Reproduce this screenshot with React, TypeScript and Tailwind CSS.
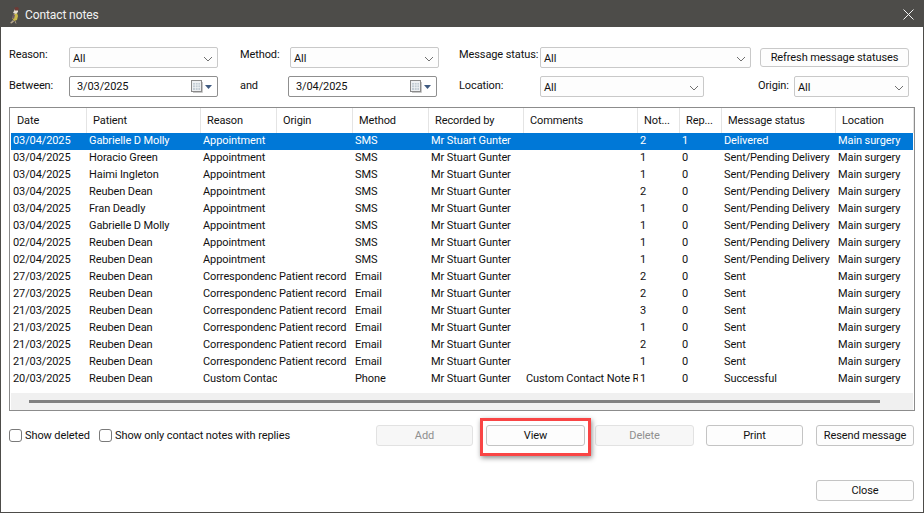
import { ReactNode } from "react";

const rows = [
  ["03/04/2025", "Gabrielle D Molly", "Appointment", "", "SMS", "Mr Stuart Gunter", "", "2", "1", "Delivered", "Main surgery"],
  ["03/04/2025", "Horacio Green", "Appointment", "", "SMS", "Mr Stuart Gunter", "", "1", "0", "Sent/Pending Delivery", "Main surgery"],
  ["03/04/2025", "Haimi Ingleton", "Appointment", "", "SMS", "Mr Stuart Gunter", "", "1", "0", "Sent/Pending Delivery", "Main surgery"],
  ["03/04/2025", "Reuben Dean", "Appointment", "", "SMS", "Mr Stuart Gunter", "", "2", "0", "Sent/Pending Delivery", "Main surgery"],
  ["03/04/2025", "Fran Deadly", "Appointment", "", "SMS", "Mr Stuart Gunter", "", "1", "0", "Sent/Pending Delivery", "Main surgery"],
  ["03/04/2025", "Gabrielle D Molly", "Appointment", "", "SMS", "Mr Stuart Gunter", "", "1", "0", "Sent/Pending Delivery", "Main surgery"],
  ["02/04/2025", "Reuben Dean", "Appointment", "", "SMS", "Mr Stuart Gunter", "", "1", "0", "Sent/Pending Delivery", "Main surgery"],
  ["02/04/2025", "Reuben Dean", "Appointment", "", "SMS", "Mr Stuart Gunter", "", "1", "0", "Sent/Pending Delivery", "Main surgery"],
  ["27/03/2025", "Reuben Dean", "Correspondence", "Patient record", "Email", "Mr Stuart Gunter", "", "2", "0", "Sent", "Main surgery"],
  ["27/03/2025", "Reuben Dean", "Correspondence", "Patient record", "Email", "Mr Stuart Gunter", "", "2", "0", "Sent", "Main surgery"],
  ["21/03/2025", "Reuben Dean", "Correspondence", "Patient record", "Email", "Mr Stuart Gunter", "", "3", "0", "Sent", "Main surgery"],
  ["21/03/2025", "Reuben Dean", "Correspondence", "Patient record", "Email", "Mr Stuart Gunter", "", "1", "0", "Sent", "Main surgery"],
  ["21/03/2025", "Reuben Dean", "Correspondence", "Patient record", "Email", "Mr Stuart Gunter", "", "2", "0", "Sent", "Main surgery"],
  ["21/03/2025", "Reuben Dean", "Correspondence", "Patient record", "Email", "Mr Stuart Gunter", "", "1", "0", "Sent", "Main surgery"],
  ["20/03/2025", "Reuben Dean", "Custom Contact", "", "Phone", "Mr Stuart Gunter", "Custom Contact Note Reply", "1", "0", "Successful", "Main surgery"],
];

const headers = ["Date", "Patient", "Reason", "Origin", "Method", "Recorded by", "Comments", "Not...", "Rep...", "Message status", "Location"];

const colsClass = "grid grid-cols-[76px_114px_76px_76px_76px_95px_114px_42px_42px_114px_78px]";

function Chevron() {
  return (
    <svg width="10" height="6" viewBox="0 0 10 6" className="absolute right-[4px] top-[8px]">
      <path d="M1 1l4 4 4-4" fill="none" stroke="#606060" strokeWidth="0.9" />
    </svg>
  );
}

function Combo({ w }: { w: string }) {
  return (
    <div className={`relative h-[21px] rounded-[2px] border border-[#c9c9c9] bg-[#fdfdfd] pl-[3px] pt-[2px] leading-[18px] ${w}`}>
      All
      <Chevron />
    </div>
  );
}

function DateBox({ value }: { value: string }) {
  return (
    <div className="flex h-[21px] w-[149px] items-center justify-between rounded-[2px] border border-[#8f8f8f] bg-white pl-[7px] pr-[5px]">
      <span className="pt-[1px]">{value}</span>
      <span className="flex items-center gap-[2px]">
        <svg width="12" height="13" viewBox="0 0 12 13">
          <rect x="0.5" y="0.5" width="10" height="11" fill="#eef0f2" stroke="#8a8a8a" />
          <path d="M11.500 2v10.500H2" fill="none" stroke="#c8c8c8" />
          <path d="M2 3h7v7H2z" fill="#c3ccd4" />
          <path d="M2 5h7M2 7.500h7M4.500 3v7M7 3v7" stroke="#f1f3f5" strokeWidth="0.7" />
        </svg>
        <svg width="7" height="4" viewBox="0 0 7 4">
          <path d="M0 0h7L3.500 4z" fill="#3f5a80" />
        </svg>
      </span>
    </div>
  );
}

function Btn({ w, disabled, children }: { w: string; disabled?: boolean; children: ReactNode }) {
  return (
    <div
      className={`flex h-[21px] items-center justify-center rounded-[3px] border pt-[2px] ${
        disabled ? "border-[#e2e2e2] bg-[#f7f7f7] text-[#8f8f8f]" : "border-[#c4c4c4] bg-[#fdfdfd]"
      } ${w}`}
    >
      {children}
    </div>
  );
}

function Check({ label, w }: { label: string; w: string }) {
  return (
    <label className={`flex items-center gap-[3px] whitespace-nowrap ${w}`}>
      <span className="h-[13px] w-[13px] shrink-0 rounded-[3px] border border-[#7a7a7a] bg-white" />
      <span className="pt-[1px]">{label}</span>
    </label>
  );
}

export default function App() {
  return (
    <div
      className="flex h-[513px] w-[924px] flex-col overflow-hidden border-x border-b border-[#4d4c49] bg-white text-[11px] tracking-[-0.1px] text-[#111]"
      style={{ fontFamily: 'Roboto, "Noto Sans", sans-serif' }}
    >
      {/* title bar */}
      <div className="flex h-[27px] shrink-0 items-center justify-between bg-[#4d4c49] pl-[4px] pr-[9px] pt-[2px] text-[#f2f2f2]">
        <div className="flex items-center gap-[3px]">
          <svg width="17" height="18" viewBox="0 0 17 18">
            <path d="M9 8l3-1 1 3-1 4-3 1-2-3z" fill="#c9b84a" />
            <path d="M8 7l2-4 3 0 0 3-2 2z" fill="#e4dcd0" />
            <path d="M9.500 1.500l3-0.500 1.500 1.500-1 2-3 0z" fill="#6e3a35" />
            <path d="M8 8l2 1-1 4-2-1z" fill="#6b5a68" />
            <path d="M8 14l-3 3 1.500 0.500L9 15.500z" fill="#b8a890" />
            <path d="M10 15l1 2.500" stroke="#a89880" strokeWidth="1" />
          </svg>
          <span className="text-[12px]">Contact notes</span>
        </div>
        <svg width="11" height="11" viewBox="0 0 11 11">
          <path d="M0.500 0.500l10 10M10.500 0.500l-10 10" stroke="#f2f2f2" strokeWidth="1" />
        </svg>
      </div>

      {/* filters */}
      <div className="px-[8px] pt-[20px]">
        <div className="flex items-start">
          <span className="w-[60px] leading-[16px]">Reason:</span>
          <Combo w="w-[149px]" />
          <span className="ml-[22px] w-[50px] leading-[16px]">Method:</span>
          <Combo w="w-[149px]" />
          <span className="ml-[20px] w-[81px] whitespace-nowrap leading-[16px]">Message status:</span>
          <Combo w="w-[211px]" />
          <div className="ml-[9px] mt-[1px] flex h-[19px] w-[149px] items-center justify-center rounded-[3px] border border-[#c9c9c9] bg-[#fdfdfd] pt-[2px]">
            Refresh message statuses
          </div>
        </div>
        <div className="mt-[8px] flex items-center">
          <span className="w-[60px]">Between:</span>
          <DateBox value="3/03/2025" />
          <span className="ml-[22px] w-[48px]">and</span>
          <DateBox value="3/04/2025" />
          <span className="ml-[22px] w-[81px]">Location:</span>
          <Combo w="w-[164px]" />
          <span className="ml-[54px] w-[36px]">Origin:</span>
          <Combo w="w-[115px]" />
        </div>
      </div>

      {/* grid */}
      <div className="mx-[8px] mt-[10px] flex h-[304px] w-[906px] flex-col border border-[#8c8c8c] pl-[1px] pr-[1px]">
        <div className={`${colsClass} h-[25px] shrink-0`}>
          {headers.map((h, i) => (
            <div key={i} className="flex items-center overflow-hidden whitespace-nowrap border-r border-[#e4e4e4] pl-[6px] pt-[2px]">
              {h}
            </div>
          ))}
        </div>
        <div className="flex-1">
          {rows.map((row, i) => (
            <div key={i} className={`${colsClass} h-[17px] leading-[16px] ${i === 0 ? "bg-[#0078d7] text-white" : ""}`}>
              {row.map((c, j) => (
                <div key={j} className="overflow-hidden whitespace-nowrap pl-[2px]">
                  {c}
                </div>
              ))}
            </div>
          ))}
        </div>
        <div className="flex h-[17px] shrink-0 items-center bg-[#f0f0f0] pl-[18px]">
          <div className="h-[3px] w-[851px] bg-[#808080]" />
        </div>
      </div>

      {/* actions */}
      <div className="mt-[14px] flex items-center pl-[8px]">
        <Check label="Show deleted" w="w-[90px]" />
        <Check label="Show only contact notes with replies" w="w-[200px]" />
        <div className="ml-auto flex items-center pr-[9px]">
          <Btn w="w-[97px]" disabled>
            Add
          </Btn>
          <div className="relative ml-[13px]">
            <Btn w="w-[99px]">View</Btn>
            <div className="absolute -inset-x-[6px] -bottom-[10px] -top-[7px] border-[3px] border-[#f94545] shadow-[1px_2px_5px_rgba(0,0,0,0.45)]" />
          </div>
          <div className="ml-[10px]">
            <Btn w="w-[99px]" disabled>
              Delete
            </Btn>
          </div>
          <div className="ml-[12px]">
            <Btn w="w-[97px]">Print</Btn>
          </div>
          <div className="ml-[13px]">
            <Btn w="w-[98px]">Resend message</Btn>
          </div>
        </div>
      </div>

      <div className="mt-[34px] flex justify-end pr-[9px]">
        <Btn w="w-[98px]">Close</Btn>
      </div>
    </div>
  );
}
